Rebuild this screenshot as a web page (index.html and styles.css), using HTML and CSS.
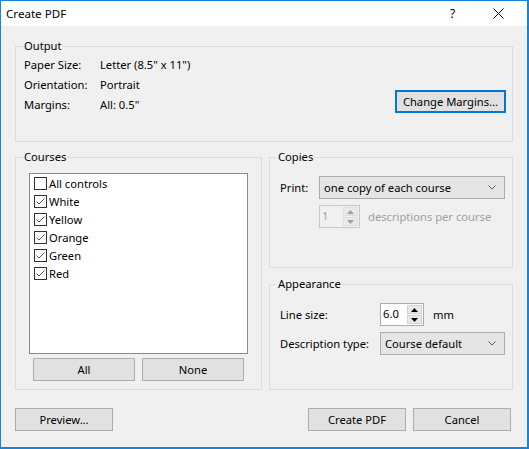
FILE: index.html
```html
<!DOCTYPE html>
<html lang="en">
<head>
<meta charset="utf-8">
<title>Create PDF</title>
<link rel="stylesheet" href="styles.css">
</head>
<body>
<div class="window">
  <div class="titlebar">
    <span class="title">Create PDF</span>
    <span class="help">?</span>
    <span class="close">
      <svg width="11" height="11" viewBox="0 0 11 11"><path d="M0.5 0.5 L10.5 10.5 M10.5 0.5 L0.5 10.5" stroke="#000" stroke-width="1" fill="none"/></svg>
    </span>
  </div>
  <div class="client">
    <fieldset class="group">
      <legend>Output</legend>
      <div class="output-body">
        <div class="props">
          <span>Paper Size:</span><span>Letter (8.5" x 11")</span>
          <span>Orientation:</span><span>Portrait</span>
          <span>Margins:</span><span>All: 0.5"</span>
        </div>
        <button class="btn btn-default">Change Margins...</button>
      </div>
    </fieldset>

    <div class="middle">
      <fieldset class="group courses">
        <legend>Courses</legend>
        <div class="courses-body">
          <div class="listbox">
            <div class="item"><span class="cb"></span><span>All controls</span></div>
            <div class="item"><span class="cb checked"><svg width="11" height="11" viewBox="0 0 11 11"><path d="M1.5 5.5 L4 8 L9.5 2.5" stroke="#555" stroke-width="1" fill="none"/></svg></span><span>White</span></div>
            <div class="item"><span class="cb checked"><svg width="11" height="11" viewBox="0 0 11 11"><path d="M1.5 5.5 L4 8 L9.5 2.5" stroke="#555" stroke-width="1" fill="none"/></svg></span><span>Yellow</span></div>
            <div class="item"><span class="cb checked"><svg width="11" height="11" viewBox="0 0 11 11"><path d="M1.5 5.5 L4 8 L9.5 2.5" stroke="#555" stroke-width="1" fill="none"/></svg></span><span>Orange</span></div>
            <div class="item"><span class="cb checked"><svg width="11" height="11" viewBox="0 0 11 11"><path d="M1.5 5.5 L4 8 L9.5 2.5" stroke="#555" stroke-width="1" fill="none"/></svg></span><span>Green</span></div>
            <div class="item"><span class="cb checked"><svg width="11" height="11" viewBox="0 0 11 11"><path d="M1.5 5.5 L4 8 L9.5 2.5" stroke="#555" stroke-width="1" fill="none"/></svg></span><span>Red</span></div>
          </div>
          <div class="list-buttons">
            <button class="btn">All</button>
            <button class="btn">None</button>
          </div>
        </div>
      </fieldset>

      <div class="right-col">
        <fieldset class="group copies">
          <legend>Copies</legend>
          <div class="copies-body">
            <div class="row">
              <span class="lbl lbl-print">Print:</span>
              <div class="combo combo-print"><span>one copy of each course</span>
                <svg class="chev" width="8" height="5" viewBox="0 0 8 5"><path d="M0.5 0.5 L4 4 L7.5 0.5" stroke="#606060" fill="none"/></svg>
              </div>
            </div>
            <div class="row row2 indent-print">
              <div class="spin spin-disabled">
                <span class="spin-val">1</span>
                <span class="spin-btns">
                  <span class="sb"><svg width="7" height="4" viewBox="0 0 7 4"><path d="M0 4 L3.5 0 L7 4Z" fill="#a0a0a0"/></svg></span>
                  <span class="sb"><svg width="7" height="4" viewBox="0 0 7 4"><path d="M0 0 L3.5 4 L7 0Z" fill="#a0a0a0"/></svg></span>
                </span>
              </div>
              <span class="disabled-text">descriptions per course</span>
            </div>
          </div>
        </fieldset>

        <fieldset class="group appearance">
          <legend>Appearance</legend>
          <div class="appearance-body">
            <div class="row">
              <span class="lbl lbl-app">Line size:</span>
              <div class="spin spin-line">
                <span class="spin-val">6.0</span>
                <span class="spin-btns">
                  <span class="sb"><svg width="7" height="4" viewBox="0 0 7 4"><path d="M0 4 L3.5 0 L7 4Z" fill="#000"/></svg></span>
                  <span class="sb"><svg width="7" height="4" viewBox="0 0 7 4"><path d="M0 0 L3.5 4 L7 0Z" fill="#000"/></svg></span>
                </span>
              </div>
              <span class="unit">mm</span>
            </div>
            <div class="row row2">
              <span class="lbl lbl-app">Description type:</span>
              <div class="combo combo-desc"><span>Course default</span>
                <svg class="chev" width="8" height="5" viewBox="0 0 8 5"><path d="M0.5 0.5 L4 4 L7.5 0.5" stroke="#606060" fill="none"/></svg>
              </div>
            </div>
          </div>
        </fieldset>
      </div>
    </div>

    <div class="footer">
      <button class="btn btn-foot">Preview...</button>
      <button class="btn btn-foot push">Create PDF</button>
      <button class="btn btn-foot">Cancel</button>
    </div>
  </div>
</div>
</body>
</html>
```
FILE: styles.css
```css
* { box-sizing: border-box; }

html, body {
  margin: 0;
  padding: 0;
}

body {
  background: #f0f0f0;
  font-family: "Noto Sans", "Open Sans", sans-serif;
  font-size: 11.2px;
  color: #000;
}

.window {
  width: 529px;
  height: 449px;
  border: 1px solid #1883d7;
  border-right-width: 2px;
  border-bottom-width: 2px;
  display: flex;
  flex-direction: column;
  background: #f0f0f0;
}

.titlebar {
  height: 25px;
  flex: none;
  background: #fff;
  display: flex;
  align-items: center;
}

.title {
  padding-left: 5px;
  font-size: 11.6px;
  flex: 1;
}

.help {
  width: 8px;
  font-size: 12px;
  margin-right: 35px;
}

.close {
  width: 11px;
  height: 11px;
  display: flex;
  margin-right: 23px;
}

.client {
  flex: 1;
  padding: 12px 14px 0 14px;
  display: flex;
  flex-direction: column;
}

fieldset.group {
  margin: 0;
  padding: 0;
  border: 1px solid #dcdcdc;
  min-width: 0;
}

fieldset.group legend {
  margin-left: 7px;
  padding: 0 1px;
  height: 16px;
  line-height: 16px;
}

.output-body {
  height: 87px;
  display: flex;
  justify-content: space-between;
  align-items: flex-start;
  padding: 0 6px 0 8px;
}

.props {
  display: grid;
  grid-template-columns: 76px auto;
  grid-auto-rows: 20px;
  align-items: center;
}

.btn {
  font: inherit;
  color: #000;
  background: #e1e1e1;
  border: 1px solid #adadad;
  height: 23px;
  padding: 0;
  margin: 0;
}

.btn-default {
  width: 111px;
  margin-top: 36px;
  border: 2px solid #0078d7;
}

.middle {
  display: flex;
  gap: 7px;
  margin-top: 7px;
}

.courses {
  width: 247px;
  flex: none;
}

.courses-body {
  padding: 8px 13px 8px 13px;
}

.listbox {
  height: 181px;
  border: 1px solid #828790;
  background: #fff;
  padding-left: 4px;
}

.item {
  height: 18px;
  display: flex;
  align-items: center;
  gap: 2px;
}

.cb {
  width: 13px;
  height: 13px;
  border: 1px solid #333;
  background: #fff;
  display: flex;
  flex: none;
}

.list-buttons {
  display: flex;
  gap: 7px;
  padding: 4px 4px 0 4px;
}

.list-buttons .btn {
  flex: 1;
}

.right-col {
  flex: 1;
  display: flex;
  flex-direction: column;
  gap: 8px;
}

.copies-body {
  height: 102px;
  padding: 11px 7px 0 10px;
}

.appearance {
  flex: 1;
}

.appearance-body {
  padding: 11px 7px 0 10px;
}

.row {
  display: flex;
  align-items: center;
  height: 23px;
}

.row2 {
  margin-top: 6px;
}

.lbl-print {
  width: 39px;
}

.indent-print {
  padding-left: 39px;
}

.lbl-app {
  width: 100px;
}

.combo {
  height: 23px;
  border: 1px solid #adadad;
  background: #e5e5e5;
  display: flex;
  align-items: center;
  padding-left: 4px;
}

.combo .chev {
  margin-left: auto;
  margin-right: 8px;
}

.combo-print {
  width: 186px;
}

.combo-desc {
  width: 125px;
}

.spin {
  height: 23px;
  display: flex;
  border: 1px solid #abadb3;
  background: #fff;
}

.spin-val {
  flex: 1;
  padding-left: 2px;
  line-height: 19px;
}

.spin-btns {
  width: 16px;
  display: flex;
  flex-direction: column;
  padding: 1px 1px 1px 0;
  gap: 1px;
}

.sb {
  flex: 1;
  background: #e8e8e8;
  border: 1px solid #d4d4d4;
  display: flex;
  align-items: center;
  justify-content: center;
}

.spin-disabled {
  width: 41px;
  border-color: #c8c8c8;
  background: #f0f0f0;
  color: #a0a0a0;
}

.spin-disabled .sb {
  background: #eaeaea;
  border-color: #dedede;
}

.spin-line {
  width: 44px;
}

.disabled-text {
  color: #a0a0a0;
  margin-left: 8px;
}

.unit {
  margin-left: 9px;
}

.footer {
  display: flex;
  gap: 7px;
  margin-top: 18px;
  padding-right: 2px;
}

.btn-foot {
  width: 98px;
}

.push {
  margin-left: auto;
}
```
